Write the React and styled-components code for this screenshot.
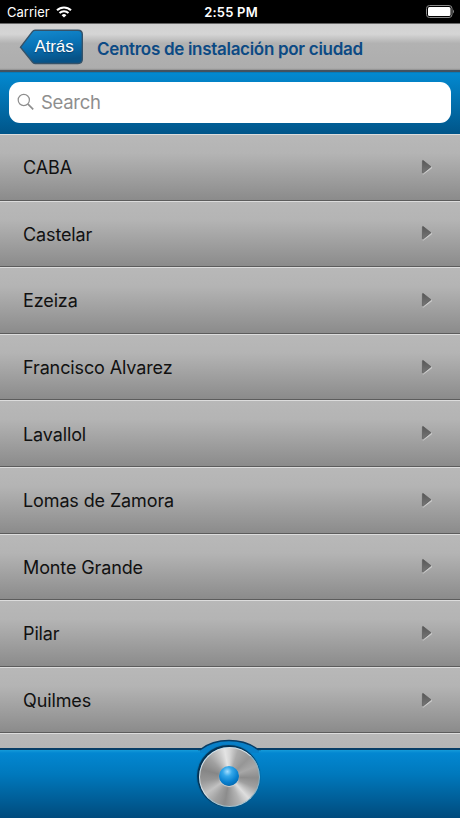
import React from "react";
import styled, { createGlobalStyle } from "styled-components";

const GlobalStyle = createGlobalStyle`
  * {
    box-sizing: border-box;
  }
  body {
    margin: 0;
    background: #000;
    font-family: Inter, "Liberation Sans", sans-serif;
  }
`;
const Screen = styled.div`
  display: flex;
  flex-direction: column;
  width: 460px;
  height: 818px;
  overflow: hidden;
  background: #b4b4b4;
`;
const StatusBar = styled.div`
  display: grid;
  grid-template-columns: 1fr auto 1fr;
  align-items: center;
  flex: none;
  height: 23px;
  padding: 1px 5px 0 7px;
  background: #000;
  color: #fff;
  font-size: 13px;
  .carrier {
    display: flex;
    align-items: center;
    gap: 6px;
  }
  .time {
    font-weight: 600;
    letter-spacing: 0.2px;
  }
  .battery {
    justify-self: end;
  }
  svg {
    display: block;
    margin-top: -1px;
  }
`;
const Header = styled.div`
  display: flex;
  align-items: center;
  flex: none;
  height: 49px;
  padding-left: 19px;
  border-top: 1px solid #666;
  border-bottom: 2px solid #43525f;
  background: linear-gradient(#d0d0d0 0%, #d5d5d5 22%, #b2b2b2 42%, #adadad 96%, #8f8f8f 100%);
  h1 {
    margin: 3px 0 0 13px;
    font-size: 17px;
    font-weight: 600;
    line-height: 22px;
    letter-spacing: -0.3px;
    color: #0c4a84;
    white-space: nowrap;
  }
`;
const BackButton = styled.button`
  display: grid;
  width: 65px;
  height: 37px;
  padding: 0;
  border: 0;
  background: none;
  color: #fff;
  font: 17px "Liberation Sans", sans-serif;
  letter-spacing: -0.1px;
  > * {
    grid-area: 1 / 1;
  }
  span {
    align-self: center;
    padding: 0 0 1px 5px;
    text-shadow: 0 1px 1px #0b3f6b;
  }
`;
const SearchBar = styled.div`
  flex: none;
  height: 62px;
  padding: 9px 9px 0;
  border-top: 1px solid #087bb8;
  background: linear-gradient(#0389d0, #005589);
`;
const SearchField = styled.div`
  display: flex;
  align-items: center;
  gap: 6px;
  height: 41px;
  padding: 0 8px 1px;
  border-radius: 11px;
  background: #fff;
  color: #8e8e8e;
  font-size: 18.5px;
  letter-spacing: -0.3px;
`;
const List = styled.div`
  flex: 1;
  min-height: 0;
  overflow: hidden;
`;
const Row = styled.div`
  display: flex;
  align-items: center;
  justify-content: space-between;
  height: 66.6px;
  padding: 1px 27px 0 23px;
  border-top: 1px solid #dcdcdc;
  border-bottom: 1px solid #5c5c5c;
  background: linear-gradient(#b8b8b8, #b4b4b4 28%, #8b8b8b);
  color: #111;
  font-size: 18px;
  letter-spacing: -0.12px;
  svg {
    margin-top: -1px;
  }
`;
const TabBar = styled.div`
  position: relative;
  flex: none;
  height: 70px;
  border-top: 2px solid #073d66;
  background: linear-gradient(#159bd9 0, #0387d1 3px, #0079bd 35%, #004b7d);
`;
const HomeButton = styled.button`
  position: absolute;
  left: 189px;
  top: -13px;
  width: 82px;
  height: 76px;
  padding: 0;
  border: 0;
  background: none;
  svg {
    display: block;
  }
`;
const Disc = styled.div`
  position: absolute;
  left: 10px;
  top: 10px;
  width: 61px;
  height: 60px;
  border-radius: 50%;
  border: 1px solid;
  border-color: #dce0e2 #8fb4c4 #a9c5d0 #dce0e2;
  background: conic-gradient(
    #d6d6d6 0deg,
    #aaa 18deg,
    #969696 45deg,
    #a8a8a8 68deg,
    #8c8c8c 92deg,
    #a0a0a0 112deg,
    #dedede 138deg,
    #b4b4b4 158deg,
    #8c8c8c 190deg,
    #a0a0a0 212deg,
    #c2c2c2 235deg,
    #969696 262deg,
    #868686 285deg,
    #a0a0a0 312deg,
    #ccc 338deg,
    #e4e4e4 350deg,
    #d6d6d6 360deg
  );
  box-shadow: -1px -1px 1px 1px #06304f;
`;
const Ball = styled.div`
  position: absolute;
  left: 30px;
  top: 29px;
  width: 20px;
  height: 20px;
  border-radius: 50%;
  background: radial-gradient(circle at 42% 28%, #a5deff 0, #35a8ea 25%, #087fce 58%, #005492 100%);
  box-shadow: 0 1px 1px #d8d8d8;
`;

const cities = [
  "CABA",
  "Castelar",
  "Ezeiza",
  "Francisco Alvarez",
  "Lavallol",
  "Lomas de Zamora",
  "Monte Grande",
  "Pilar",
  "Quilmes",
];

function WifiIcon() {
  return (
    <svg width="16" height="12" viewBox="0 0 16 12" fill="none" stroke="#fff" strokeWidth="2">
      <path d="M1 4.3a10 10 0 0 1 14 0" />
      <path d="M3.5 7a6.4 6.4 0 0 1 9 0" />
      <path d="M8 11.6 5.6 9.2a3.4 3.4 0 0 1 4.8 0z" fill="#fff" stroke="none" />
    </svg>
  );
}

function BatteryIcon() {
  return (
    <svg className="battery" width="29" height="13" viewBox="0 0 29 13">
      <rect x="0.5" y="0.5" width="25.5" height="12" rx="3" fill="none" stroke="#8b8b8b" />
      <rect x="2" y="2" width="22.5" height="9" rx="1.5" fill="#fff" />
      <path d="M27 4.5q2 2 0 4z" fill="#8b8b8b" />
    </svg>
  );
}

function BackShape() {
  return (
    <svg width="65" height="37" viewBox="0 0 65 37">
      <defs>
        <linearGradient id="back" x1="0" y1="0" x2="0.25" y2="1">
          <stop offset="0" stopColor="#168cd0" />
          <stop offset="0.5" stopColor="#0873b7" />
          <stop offset="1" stopColor="#075287" />
        </linearGradient>
      </defs>
      <path
        d="M16 1.2H59Q63.3 1.2 63.3 5.5V30.3Q63.3 34.5 59 34.5H16Q14.5 34.5 13.4 33L1.5 18.3 13.4 2.7Q14.5 1.2 16 1.2Z"
        fill="url(#back)"
        stroke="#345269"
        strokeWidth="1.4"
      />
    </svg>
  );
}

function SearchIcon() {
  return (
    <svg width="18" height="18" viewBox="0 0 18 18" fill="none" stroke="#8e8e8e" strokeWidth="1.2">
      <circle cx="6.8" cy="7" r="5.6" />
      <path d="m11 11.2 5.2 5.2" strokeWidth="1.7" />
    </svg>
  );
}

function Arrow() {
  return (
    <svg width="12" height="17" viewBox="0 0 12 17">
      <defs>
        <linearGradient id="arrow" x1="0" y1="0" x2="0" y2="1">
          <stop offset="0" stopColor="#585858" />
          <stop offset="1" stopColor="#777" />
        </linearGradient>
      </defs>
      <path d="M1.6 15.2 10.8 8.3" fill="none" stroke="#cbcbcb" strokeWidth="1.5" />
      <path
        d="M1.4 2Q1.4 1 2.3 1.6L10 7.7 2.3 14Q1.4 14.6 1.4 13.6Z"
        fill="url(#arrow)"
        stroke="#555"
        strokeWidth="0.6"
      />
    </svg>
  );
}

function App() {
  return (
    <>
      <GlobalStyle />
      <Screen>
        <StatusBar>
          <div className="carrier">
            Carrier <WifiIcon />
          </div>
          <div className="time">2:55 PM</div>
          <BatteryIcon />
        </StatusBar>
        <Header>
          <BackButton>
            <BackShape />
            <span>Atrás</span>
          </BackButton>
          <h1>Centros de instalación por ciudad</h1>
        </Header>
        <SearchBar>
          <SearchField>
            <SearchIcon />
            Search
          </SearchField>
        </SearchBar>
        <List>
          {cities.map((city) => (
            <Row key={city}>
              {city}
              <Arrow />
            </Row>
          ))}
          <Row />
        </List>
        <TabBar>
          <HomeButton aria-label="Home">
            <svg width="82" height="76" viewBox="0 0 82 76">
              <path d="M11 16V13Q23 3.5 40 3.5T70 13V16Z" fill="#0880c8" />
              <path d="M9 12.5H11.5Q23 3.5 40 3.5T69 12.5H72" fill="none" stroke="#073d66" strokeWidth="1.5" />
            </svg>
            <Disc />
            <Ball />
          </HomeButton>
        </TabBar>
      </Screen>
    </>
  );
}

export default App;
